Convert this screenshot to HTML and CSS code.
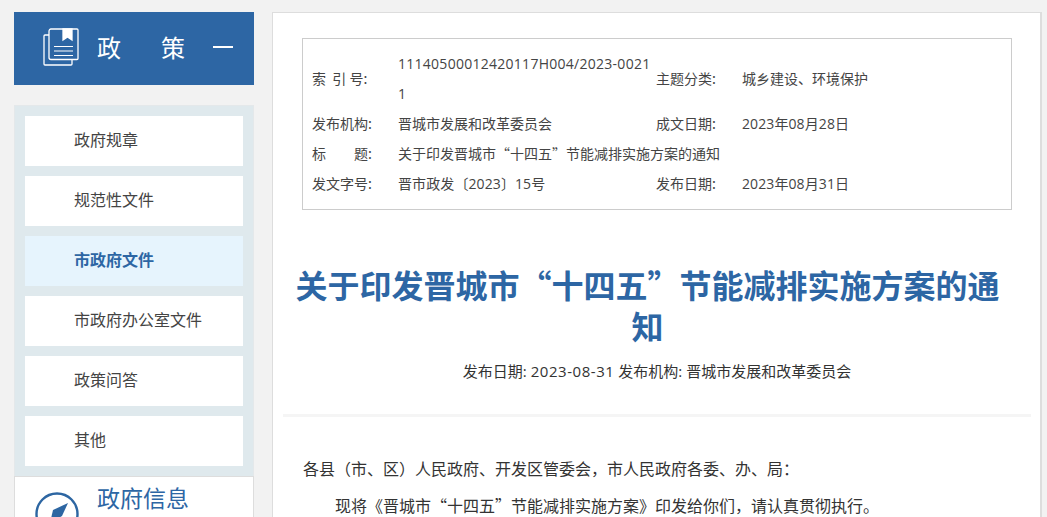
FILE: index.html
```html
<!DOCTYPE html>
<html lang="zh-CN">
<head>
  <meta charset="UTF-8">
  <title>关于印发晋城市“十四五”节能减排实施方案的通知</title>
  <link rel="stylesheet" href="styles.css">
</head>
<body>
  <div class="page">
    <aside class="sidebar">
      <div class="side-title">
        <svg class="side-icon" viewBox="0 0 36 38" fill="none" stroke="#fff" stroke-width="1.3">
          <path d="M6 3.5V29.5C6 30.6 6.9 31.5 8 31.5H34C34.6 31.5 35 31.1 35 30.5V2C35 1.4 34.6 1 34 1H8C6.9 1 6 1.9 6 3.5Z"/>
          <path d="M6 7H2C1.4 7 1 7.4 1 8V36C1 36.6 1.4 37 2 37H28C28.6 37 29 36.6 29 36V31.5"/>
          <path d="M20 1V12L24.5 9L29 12V1Z" fill="#fff"/>
          <path d="M11 18.5H30M11 23H30M11 27.5H30" stroke-width="1.2"/>
        </svg>
        <span class="side-name">政</span>
        <span class="side-name side-name-2">策</span>
        <span class="side-dash"></span>
      </div>
      <ul class="side-nav">
        <li><a>政府规章</a></li>
        <li><a>规范性文件</a></li>
        <li class="active"><a>市政府文件</a></li>
        <li><a>市政府办公室文件</a></li>
        <li><a>政策问答</a></li>
        <li><a>其他</a></li>
      </ul>
      <div class="side-info">
        <svg class="compass" viewBox="0 0 44 44" fill="none">
          <circle cx="22" cy="22" r="20.5" stroke="#2d66a2" stroke-width="2.4"/>
          <path d="M33 11L18 18L15 31L27 24Z" fill="#2d66a2"/>
        </svg>
        <span class="info-name">政府信息</span>
      </div>
    </aside>

    <main class="content">
      <div class="meta-box">
        <table class="meta-table">
          <colgroup>
            <col class="col-label"><col class="col-value"><col class="col-label"><col>
          </colgroup>
          <tr>
            <th>索&nbsp;&nbsp;引&nbsp;号:</th>
            <td class="num code">11140500012420117H004/2023-00211</td>
            <th>主题分类:</th>
            <td>城乡建设、环境保护</td>
          </tr>
          <tr>
            <th>发布机构:</th>
            <td>晋城市发展和改革委员会</td>
            <th>成文日期:</th>
            <td class="num">2023年08月28日</td>
          </tr>
          <tr>
            <th>标&emsp;&emsp;题:</th>
            <td colspan="3">关于印发晋城市“十四五”节能减排实施方案的通知</td>
          </tr>
          <tr>
            <th>发文字号:</th>
            <td class="num">晋市政发〔2023〕15号</td>
            <th>发布日期:</th>
            <td class="num">2023年08月31日</td>
          </tr>
        </table>
      </div>

      <h1 class="doc-title">关于印发晋城市“十四五”节能减排实施方案的通知</h1>
      <p class="doc-info">发布日期: <span class="doc-date">2023-08-31</span> 发布机构: 晋城市发展和改革委员会</p>

      <div class="doc-body">
        <p>各县（市、区）人民政府、开发区管委会，市人民政府各委、办、局：</p>
        <p class="indent">现将《晋城市“十四五”节能减排实施方案》印发给你们，请认真贯彻执行。</p>
      </div>
    </main>
  </div>
</body>
</html>
```

FILE: styles.css
```css
* {
  margin: 0;
  padding: 0;
  box-sizing: border-box;
}

html,
body {
  height: 517px;
  overflow: hidden;
}

body {
  font-family: "Noto Sans CJK SC", "Liberation Sans", sans-serif;
  background: #f2f2f2;
  color: #333;
}

.page {
  display: flex;
  align-items: flex-start;
  gap: 18px;
  padding: 12px 5px 0 14px;
  height: 517px;
  overflow: hidden;
}

.sidebar {
  width: 240px;
  flex-shrink: 0;
}

.side-title {
  height: 73px;
  background: #2d66a4;
  display: flex;
  align-items: center;
  padding: 0 0 3px 29px;
  color: #fff;
  font-size: 24px;
}

.side-icon {
  width: 36px;
  height: 38px;
  flex-shrink: 0;
}

.side-name {
  margin-left: 18px;
  line-height: 1;
}

.side-name-2 {
  margin-left: 40px;
}

.side-dash {
  width: 20px;
  height: 2px;
  margin-left: 28px;
  background: #fff;
}

.side-nav {
  list-style: none;
  margin-top: 20px;
  padding: 10px;
  background: #dfe9ed;
  border: 1px solid #e4e8ea;
  border-bottom: 0;
}

.side-nav li {
  height: 50px;
  margin-bottom: 10px;
  padding-left: 49px;
  background: #fff;
  line-height: 47px;
  font-size: 16px;
  color: #444;
}

.side-nav li:last-child {
  margin-bottom: 0;
}

.side-nav li.active {
  background: #e6f4fd;
  color: #2d66a4;
  font-weight: 700;
}

.side-info {
  height: 80px;
  display: flex;
  align-items: flex-start;
  background: #fff;
  border: 1px solid #ddd;
  padding: 5px 0 0 20px;
}

.compass {
  width: 44px;
  height: 44px;
  margin-top: 10px;
  flex-shrink: 0;
}

.info-name {
  margin-left: 18px;
  font-size: 23px;
  line-height: 30px;
  color: #2d66a4;
}

.content {
  flex: 1;
  min-width: 0;
  height: 520px;
  background: #fff;
  border: 1px solid #ddd;
  border-right-width: 2px;
  padding: 25px 9px 0 10px;
}

.meta-box {
  margin: 0 19px;
  width: 710px;
  height: 172px;
  padding: 10px 9px;
  border: 1px solid #ccc;
}

.meta-table {
  width: 100%;
  table-layout: fixed;
  border-collapse: collapse;
  font-size: 14px;
  line-height: 28px;
  color: #444;
}

.col-label {
  width: 86px;
}

.col-value {
  width: 258px;
}

.meta-table th {
  padding-bottom: 2px;
  font-weight: 400;
  text-align: left;
  white-space: nowrap;
}

.meta-table td {
  padding-bottom: 2px;
  word-break: break-all;
}

.meta-table td.num {
  padding-bottom: 0;
  font-family: "Open Sans", "Noto Sans CJK SC", sans-serif;
  line-height: 30px;
  letter-spacing: 0.1px;
}

.meta-table td.code {
  letter-spacing: 0.27px;
}

.doc-title {
  margin: 54px 19px 0 0;
  font-size: 32px;
  line-height: 41px;
  font-weight: 700;
  text-align: center;
  color: #2d66a4;
}

.doc-info {
  margin-top: 15px;
  padding-bottom: 33px;
  border-bottom: 3px solid #f5f5f5;
  font-family: "Open Sans", "Noto Sans CJK SC", sans-serif;
  font-size: 15px;
  line-height: 20px;
  text-align: center;
}

.doc-date {
  letter-spacing: 0.55px;
}

.doc-body {
  padding: 33px 20px 0;
  font-size: 16px;
  line-height: 37px;
}

.doc-body .indent {
  text-indent: 32px;
}
```
